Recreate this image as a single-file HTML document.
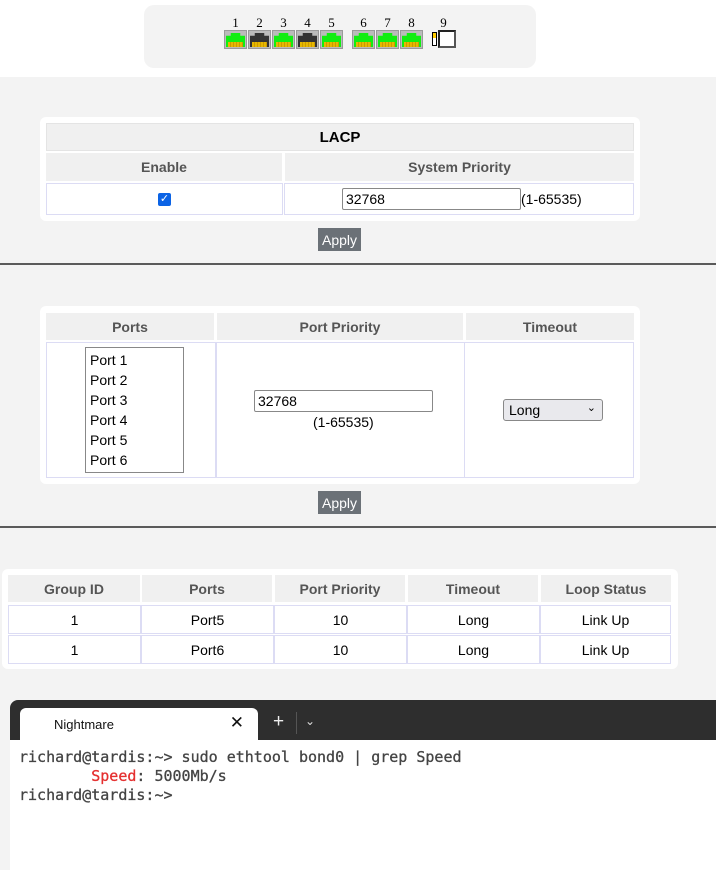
<!DOCTYPE html>
<html><head><meta charset="utf-8"><style>
*{box-sizing:border-box;margin:0;padding:0}
html,body{width:716px;height:855px}
body{position:relative;background:#f3f3f3;font-family:"Liberation Sans",Arial,sans-serif;overflow:hidden}
.a{position:absolute}
.hd{position:absolute;background:#f0f0f0;color:#555;font-weight:bold;font-size:14px;display:flex;align-items:center;justify-content:center}
.td{position:absolute;background:#fff;border:1px solid #dcdcf4;color:#000;font-size:14px;display:flex;align-items:center;justify-content:center}
.box{position:absolute;background:#fff;border-radius:6px}
.btn{position:absolute;background:#6b7177;color:#fff;font-size:14px;display:flex;align-items:center;justify-content:center}
.inp{position:absolute;background:#fff;border:1px solid #888;border-radius:2px;font-size:14px;padding-left:3px;display:flex;align-items:center}
.hr{position:absolute;left:0;width:716px;height:2px;background:#5a5a5a}
.port{position:absolute;top:30px;width:23px;height:19px;background:#bbb;border:1px solid #999}
.port i{position:absolute;left:1px;top:2px;width:19px;height:14px;background:#1e1;clip-path:polygon(25% 0,75% 0,75% 20%,100% 20%,100% 100%,0 100%,0 20%,25% 20%)}
.port b{position:absolute;left:3px;top:11px;width:15px;height:5px;background:repeating-linear-gradient(90deg,#e6b800 0 2px,#c90 2px 3px)}
.port.d i{background:#333}
.num{position:absolute;top:15px;font-family:"Liberation Serif",serif;font-size:13px;width:23px;text-align:center}
.mono{font-family:"DejaVu Sans Mono","Liberation Mono",monospace;font-size:15px;color:#444}
</style></head><body>
<div class="a" style="left:0;top:0;width:716px;height:77px;background:#fff"></div>
<div class="a" style="left:144px;top:5px;width:392px;height:63px;background:#f3f3f3;border-radius:10px"></div>
<div class="num" style="left:224px">1</div><div class="num" style="left:248px">2</div><div class="num" style="left:272px">3</div><div class="num" style="left:296px">4</div><div class="num" style="left:320px">5</div><div class="num" style="left:352px">6</div><div class="num" style="left:376px">7</div><div class="num" style="left:400px">8</div><div class="num" style="left:432px">9</div>
<div class="port" style="left:224px"><i></i><b></b></div>
<div class="port d" style="left:248px"><i></i><b></b></div>
<div class="port" style="left:272px"><i></i><b></b></div>
<div class="port d" style="left:296px"><i></i><b></b></div>
<div class="port" style="left:320px"><i></i><b></b></div>
<div class="port" style="left:352px"><i></i><b></b></div>
<div class="port" style="left:376px"><i></i><b></b></div>
<div class="port" style="left:400px"><i></i><b></b></div>
<div class="a" style="left:432px;top:32px;width:5px;height:14px;background:#fff;border:1px solid #000"><div style="height:5px;background:#fc0"></div></div>
<div class="a" style="left:438px;top:30px;width:18px;height:18px;background:#fff;border:2px solid #222;border-right-color:#555;border-bottom-color:#555"></div>

<div class="box" style="left:40px;top:117px;width:600px;height:104px"></div>
<div class="hd" style="left:46px;top:123px;width:588px;height:28px;color:#000;font-size:15px;border:1px solid #e4e4e4">LACP</div>
<div class="hd" style="left:46px;top:153px;width:236px;height:28px">Enable</div>
<div class="hd" style="left:285px;top:153px;width:349px;height:28px">System Priority</div>
<div class="td" style="left:46px;top:183px;width:237px;height:32px"><div style="width:13px;height:13px;background:#0b63e5;border-radius:2px;color:#fff;font-size:11px;line-height:13px;text-align:center">✓</div></div>
<div class="td" style="left:284px;top:183px;width:350px;height:32px"></div>
<div class="inp" style="left:342px;top:188px;width:179px;height:22px">32768</div>
<div class="a" style="left:521px;top:191px;font-size:14px">(1-65535)</div>
<div class="btn" style="left:318px;top:228px;width:43px;height:23px">Apply</div>
<div class="hr" style="top:263px"></div>

<div class="box" style="left:40px;top:306px;width:600px;height:178px"></div>
<div class="hd" style="left:46px;top:313px;width:168px;height:27px">Ports</div>
<div class="hd" style="left:217px;top:313px;width:246px;height:27px">Port Priority</div>
<div class="hd" style="left:466px;top:313px;width:168px;height:27px">Timeout</div>
<div class="td" style="left:46px;top:342px;width:170px;height:136px"></div>
<div class="td" style="left:216px;top:342px;width:249px;height:136px"></div>
<div class="td" style="left:464px;top:342px;width:170px;height:136px"></div>
<div class="a" style="left:85px;top:347px;width:99px;height:126px;border:1px solid #888;background:#fff;font-size:14px;line-height:20px;padding:2px 0 0 4px">Port 1<br>Port 2<br>Port 3<br>Port 4<br>Port 5<br>Port 6</div>
<div class="inp" style="left:254px;top:390px;width:179px;height:22px">32768</div>
<div class="a" style="left:313px;top:414px;font-size:14px">(1-65535)</div>
<div class="a" style="left:503px;top:399px;width:100px;height:22px;background:#e9e9ed;border:1px solid #888;border-radius:3px;font-size:14px;padding:2px 0 0 5px">Long<span style="position:absolute;right:6px;top:1px;font-size:11px">⌄</span></div>
<div class="btn" style="left:318px;top:491px;width:43px;height:23px">Apply</div>
<div class="hr" style="top:526px"></div>

<div class="box" style="left:2px;top:569px;width:676px;height:100px"></div>
<div class="hd" style="left:8px;top:575px;width:132px;height:27px">Group ID</div>
<div class="hd" style="left:142px;top:575px;width:130px;height:27px">Ports</div>
<div class="hd" style="left:275px;top:575px;width:130px;height:27px">Port Priority</div>
<div class="hd" style="left:408px;top:575px;width:130px;height:27px">Timeout</div>
<div class="hd" style="left:541px;top:575px;width:130px;height:27px">Loop Status</div>
<div class="td" style="left:8px;top:605px;width:133px;height:29px">1</div>
<div class="td" style="left:141px;top:605px;width:133px;height:29px">Port5</div>
<div class="td" style="left:274px;top:605px;width:133px;height:29px">10</div>
<div class="td" style="left:407px;top:605px;width:133px;height:29px">Long</div>
<div class="td" style="left:540px;top:605px;width:131px;height:29px">Link Up</div>
<div class="td" style="left:8px;top:635px;width:133px;height:29px">1</div>
<div class="td" style="left:141px;top:635px;width:133px;height:29px">Port6</div>
<div class="td" style="left:274px;top:635px;width:133px;height:29px">10</div>
<div class="td" style="left:407px;top:635px;width:133px;height:29px">Long</div>
<div class="td" style="left:540px;top:635px;width:131px;height:29px">Link Up</div>

<div class="a" style="left:10px;top:700px;width:720px;height:60px;background:#2e2e2e;border-radius:8px 0 0 0"></div>
<div class="a" style="left:20px;top:708px;width:238px;height:34px;background:#fff;border-radius:6px 6px 0 0;font-family:'Liberation Sans',sans-serif;font-size:13px;color:#111;padding:9px 0 0 34px">Nightmare<span style="position:absolute;right:14px;top:5px;font-size:17px">✕</span></div>
<div class="a" style="left:273px;top:711px;color:#eee;font-size:19px">+</div>
<div class="a" style="left:296px;top:712px;width:1px;height:22px;background:#555"></div>
<div class="a" style="left:305px;top:714px;color:#ddd;font-size:12px">⌄</div>
<div class="a" style="left:10px;top:740px;width:706px;height:130px;background:#fff"></div>
<div class="a mono" style="left:19px;top:748px;line-height:19px;white-space:pre;-webkit-text-stroke:0.3px #444">richard@tardis:~&gt; sudo ethtool bond0 | grep Speed
        <span style="color:#e53030;-webkit-text-stroke:0.3px #e53030">Speed</span>: 5000Mb/s
richard@tardis:~&gt;</div>
</body></html>
